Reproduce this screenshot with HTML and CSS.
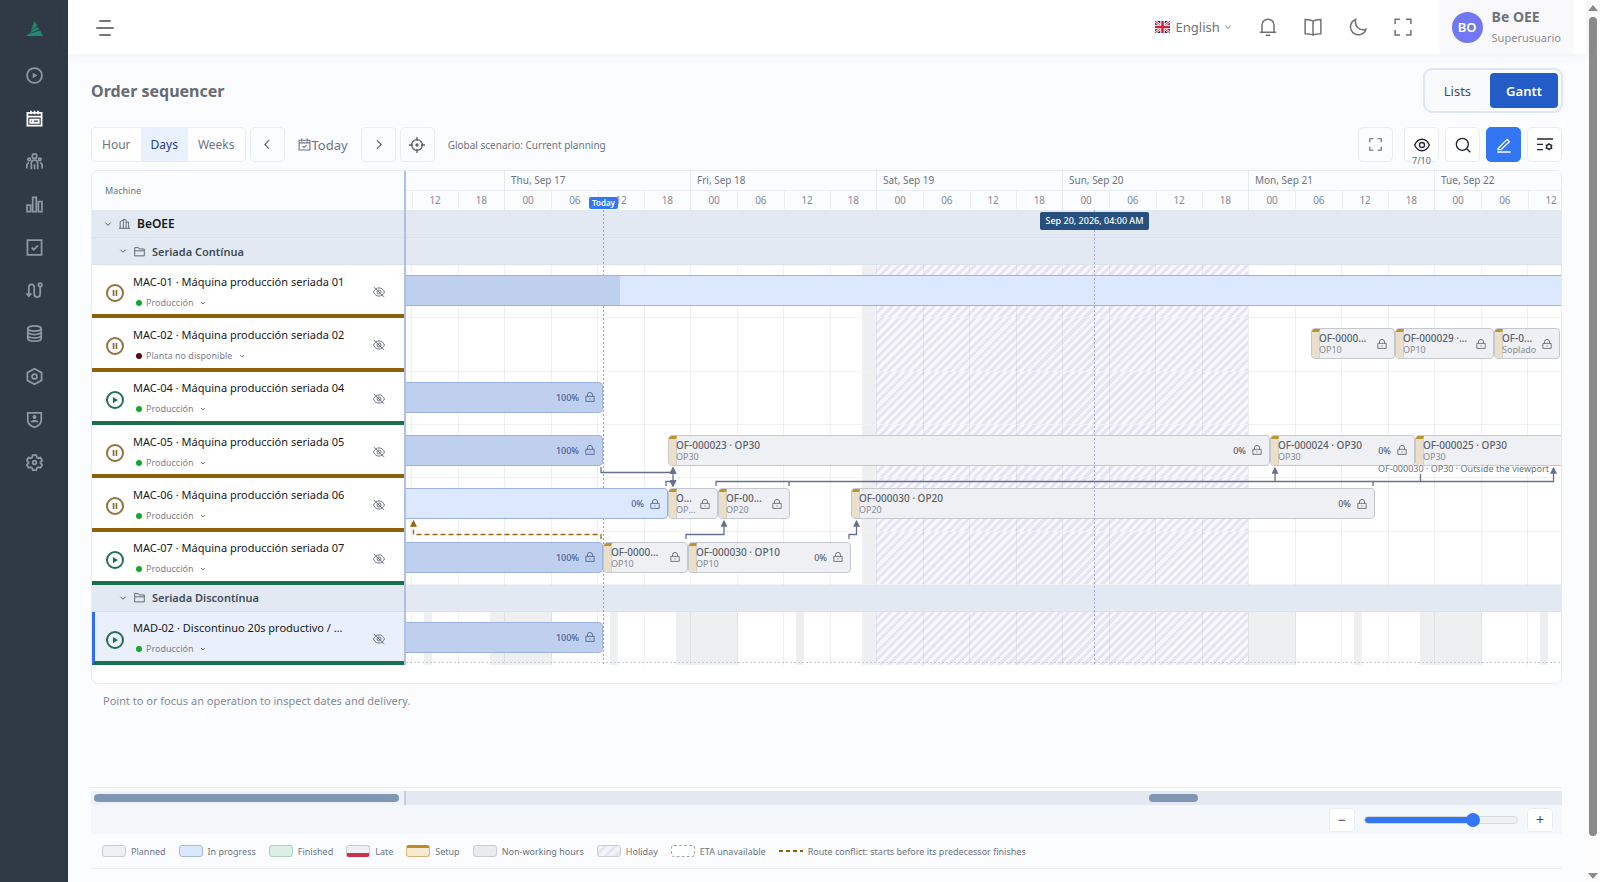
FILE: index.html
```html
<!DOCTYPE html>
<html lang="en">
<head>
    <meta charset="UTF-8">
    <meta name="viewport" content="width=device-width, initial-scale=1.0">
    <title>Order sequencer</title>
    <link rel="stylesheet" href="styles.css">
</head>
<body>
    <svg class="sprite" aria-hidden="true">
        <symbol id="i-play-circle" viewBox="0 0 24 24"><circle cx="12" cy="12" r="10.5"/><path d="M9.5 8v8l6.500-4z" fill="currentColor" stroke="none"/></symbol>
        <symbol id="i-planner" viewBox="0 0 24 24"><path d="M2 4h20v18H2zM2 9.500h20M7 1v5M12 1v5M17 1v5M6 13.500h12v4.500H6zM10 13.500v4.500"/></symbol>
        <symbol id="i-team" viewBox="0 0 24 24"><circle cx="12" cy="4.500" r="3.200"/><circle cx="4.500" cy="9" r="1.800"/><circle cx="19.500" cy="9" r="1.800"/><path d="M7.500 23v-8.500a4.500 4.500 0 0 1 9 0V23M12 16v7M1.200 22v-5a3.300 3.300 0 0 1 3-3M22.800 22v-5a3.300 3.300 0 0 0-3-3"/></symbol>
        <symbol id="i-chart" viewBox="0 0 24 24"><path d="M1.500 13h5v9h-5zM9.500 2h5v20h-5zM17.500 8h5v14h-5z"/></symbol>
        <symbol id="i-check-square" viewBox="0 0 24 24"><path d="M2 1.500h20v21H2zM8 12l3 3 6-6"/></symbol>
        <symbol id="i-route" viewBox="0 0 24 24"><path d="M4 20V7a3.800 3.800 0 0 1 7.600 0v10a4.200 4.200 0 0 0 8.400 0V7M.500 16l3.500 4 3.500-4"/><circle cx="20" cy="4" r="2.500"/></symbol>
        <symbol id="i-database" viewBox="0 0 24 24"><ellipse cx="12" cy="5" rx="9.500" ry="3.700"/><path d="M2.500 5v14c0 5 19 5 19 0V5M2.500 9.700c0 5 19 5 19 0M2.500 14.300c0 5 19 5 19 0"/></symbol>
        <symbol id="i-hex" viewBox="0 0 24 24"><path d="M12 1l10 5.500v11L12 23 2 17.500v-11z"/><circle cx="12" cy="12" r="3.500"/></symbol>
        <symbol id="i-shield" viewBox="0 0 24 24"><path d="M2.500 2.500h19V13c0 5-4 8-9.500 10.200C6.500 21 2.500 18 2.500 13z"/><circle cx="12" cy="8.500" r="2.800" fill="currentColor" stroke="none"/><path d="M6.500 16c0-5 11-5 11 0z" fill="currentColor" stroke="none"/></symbol>
        <symbol id="i-gear" viewBox="0 0 24 24"><path d="M9.500 1.500h5l.8 3.200 2 1.200 3.200-1 2.400 4.200-2.400 2.300v1.600l2.400 2.300-2.400 4.200-3.200-1-2 1.200-.8 3.200h-5l-.8-3.200-2-1.200-3.200 1-2.400-4.200L3.500 13v-1.600L1.100 9.100l2.400-4.200 3.200 1 2-1.200z"/><circle cx="12" cy="12" r="2.500"/></symbol>
        <symbol id="i-chevron-down" viewBox="0 0 24 24"><path d="M4 8l8 8 8-8"/></symbol>
        <symbol id="i-chevron-left" viewBox="0 0 24 24"><path d="M15 4l-8 8 8 8"/></symbol>
        <symbol id="i-chevron-right" viewBox="0 0 24 24"><path d="M9 4l8 8-8 8"/></symbol>
        <symbol id="i-bell" viewBox="0 0 24 24"><path d="M4 19V9.500a8 8 0 0 1 16 0V19M1 19h22M9 23h6"/></symbol>
        <symbol id="i-book" viewBox="0 0 24 24"><path d="M12 4.500C10.500 3 8.500 2 1.500 2v19c5.500 0 8.500.5 10.500 2 2-1.500 5-2 10.500-2V2C15.500 2 13.500 3 12 4.500zM12 4.500V23"/></symbol>
        <symbol id="i-moon" viewBox="0 0 24 24"><path d="M9 2a10.500 10.500 0 1 0 13.500 13C15 18 6.500 11 9 2z"/></symbol>
        <symbol id="i-expand" viewBox="0 0 24 24"><path d="M1.500 8V1.500H8M16 1.500h6.500V8M22.500 16v6.500H16M8 22.500H1.500V16"/></symbol>
        <symbol id="i-calendar-check" viewBox="0 0 24 24"><path d="M2 4h20v18H2zM2 9h20M7 1v6M17 1v6M8.500 15l2.500 2.500 5-4.500"/></symbol>
        <symbol id="i-target" viewBox="0 0 24 24"><circle cx="12" cy="12" r="8"/><circle cx="12" cy="12" r="1.500" fill="currentColor"/><path d="M12 0v6M12 18v6M0 12h6M18 12h6"/></symbol>
        <symbol id="i-eye" viewBox="0 0 24 24"><path d="M1 12c5-11.500 17-11.500 22 0-5 11.500-17 11.500-22 0z"/><circle cx="12" cy="12" r="3.800"/></symbol>
        <symbol id="i-eye-off" viewBox="0 0 24 24"><path d="M1 12c5-11 17-11 22 0-5 11-17 11-22 0zM1.500 2l21 20"/><circle cx="12" cy="12" r="4"/></symbol>
        <symbol id="i-search" viewBox="0 0 24 24"><circle cx="11" cy="11" r="9"/><path d="M17.500 17.500l5.500 5.500"/></symbol>
        <symbol id="i-pencil" viewBox="0 0 24 24"><path d="M3 17.500L16.500 3.500l3.500 3.500L7.500 19H3zM2 22.500h20"/></symbol>
        <symbol id="i-settings-list" viewBox="0 0 24 24"><path d="M0 3h24M0 11h9M0 19h9"/><circle cx="18" cy="14.500" r="3.500"/><path d="M18 9v2M18 18v2M13 12l2 1M21 16l2 1M13 17l2-1M21 13l2-1"/></symbol>
        <symbol id="i-building" viewBox="0 0 24 24"><path d="M0 22.500h24M2.500 22V8l7-3.500M9.500 22V2.500l6 2V22M15.500 9H21v13"/></symbol>
        <symbol id="i-folder" viewBox="0 0 24 24"><path d="M1.500 21.500v-18h8l2 3h11v15zM1.500 10.500h21"/></symbol>
        <symbol id="i-lock" viewBox="0 0 24 24"><path d="M2 10.500h20v12H2zM6 10.500V7a6 6 0 0 1 12 0v3.500M12 15v3"/></symbol>
        <symbol id="i-play" viewBox="0 0 24 24"><path d="M7 4.500v15l12-7.500z" fill="currentColor" stroke="none"/></symbol>
        <symbol id="i-pause" viewBox="0 0 24 24"><path d="M8.500 5v14M15.500 5v14" stroke-width="4"/></symbol>
    </svg>

    <nav class="sidebar" aria-label="Main">
        <a class="logo" href="#" aria-label="Be OEE">
            <svg class="logo-mark" viewBox="0 0 18 16"><path d="M9 0l3 5-7 5zM12.500 6l1.500 3-10 4 2-3zM15 10l3 6H0l2-2z" fill="#1f8a70"/></svg>
        </a>
        <a href="#" aria-label="Production"><svg class="icon"><use href="#i-play-circle"/></svg></a>
        <a href="#" class="active" aria-label="Planning"><svg class="icon"><use href="#i-planner"/></svg></a>
        <a href="#" aria-label="Teams"><svg class="icon"><use href="#i-team"/></svg></a>
        <a href="#" aria-label="Reports"><svg class="icon"><use href="#i-chart"/></svg></a>
        <a href="#" aria-label="Quality"><svg class="icon"><use href="#i-check-square"/></svg></a>
        <a href="#" aria-label="Routes"><svg class="icon"><use href="#i-route"/></svg></a>
        <a href="#" aria-label="Data"><svg class="icon"><use href="#i-database"/></svg></a>
        <a href="#" aria-label="Maintenance"><svg class="icon"><use href="#i-hex"/></svg></a>
        <a href="#" aria-label="Users"><svg class="icon"><use href="#i-shield"/></svg></a>
        <a href="#" aria-label="Settings"><svg class="icon"><use href="#i-gear"/></svg></a>
    </nav>

    <div class="page">
        <header class="topbar">
            <button class="menu-btn" aria-label="Toggle menu"><span></span><span></span><span></span></button>
            <div class="topbar-right">
                <label class="language">
                    <svg class="flag" viewBox="0 0 30 24"><path fill="#1d2f6f" d="M0 0h30v24H0z"/><path stroke="#fff" stroke-width="5" d="M0 0l30 24M30 0L0 24"/><path stroke="#d5203a" stroke-width="2" d="M0 0l30 24M30 0L0 24"/><path stroke="#fff" stroke-width="9" d="M15 0v24M0 12h30"/><path stroke="#d5203a" stroke-width="5" d="M15 0v24M0 12h30"/></svg>
                    <select aria-label="Language"><option>English</option></select>
                    <svg class="icon xs"><use href="#i-chevron-down"/></svg>
                </label>
                <button class="top-icon" aria-label="Notifications"><svg class="icon"><use href="#i-bell"/></svg></button>
                <button class="top-icon" aria-label="Manual"><svg class="icon"><use href="#i-book"/></svg></button>
                <button class="top-icon" aria-label="Dark mode"><svg class="icon"><use href="#i-moon"/></svg></button>
                <button class="top-icon" aria-label="Full screen"><svg class="icon"><use href="#i-expand"/></svg></button>
                <button class="user">
                    <span class="avatar">BO</span>
                    <span class="user-text"><strong>Be OEE</strong><small>Superusuario</small></span>
                </button>
            </div>
        </header>

        <main class="content">
            <div class="title-row">
                <h1>Order sequencer</h1>
                <div class="view-switch">
                    <button>Lists</button>
                    <button class="selected">Gantt</button>
                </div>
            </div>

            <div class="toolbar">
                <div class="segmented">
                    <button>Hour</button>
                    <button class="selected">Days</button>
                    <button>Weeks</button>
                </div>
                <button class="tool" aria-label="Previous"><svg class="icon"><use href="#i-chevron-left"/></svg></button>
                <button class="today"><svg class="icon"><use href="#i-calendar-check"/></svg>Today</button>
                <button class="tool" aria-label="Next"><svg class="icon"><use href="#i-chevron-right"/></svg></button>
                <button class="tool locate" aria-label="Center on now"><svg class="icon md"><use href="#i-target"/></svg></button>
                <span class="scenario">Global scenario: Current planning</span>
                <div class="tools">
                    <button class="tool fullscreen" aria-label="Full screen"><svg class="icon"><use href="#i-expand"/></svg></button>
                    <button class="tool solid" aria-label="Visible machines"><svg class="icon md"><use href="#i-eye"/></svg><span class="count">7/10</span></button>
                    <button class="tool solid" aria-label="Search"><svg class="icon md"><use href="#i-search"/></svg></button>
                    <button class="tool primary" aria-label="Edit"><svg class="icon md"><use href="#i-pencil"/></svg></button>
                    <button class="tool solid" aria-label="Options"><svg class="icon md"><use href="#i-settings-list"/></svg></button>
                </div>
            </div>

            <section class="planner">
                <div class="gantt">
                    <div class="resources">
                        <div class="resources-head">Machine</div>
                        <div class="rows" id="resources"></div>
                    </div>
                    <div class="timeline">
                        <div class="scale" id="scale"></div>
                        <div class="rows" id="tracks"></div>
                        <div class="gridlines" id="gridlines"></div>
                        <div class="now-line" id="now-line"><span>Today</span></div>
                        <svg class="links">
                            <defs>
                                <marker id="arrow" viewBox="0 0 6 6" refX="5" refY="3" markerWidth="7" markerHeight="7" markerUnits="userSpaceOnUse" orient="auto"><path d="M0 0l6 3-6 3z" fill="#66718d"/></marker>
                                <marker id="arrow-conflict" viewBox="0 0 6 6" refX="5" refY="3" markerWidth="7" markerHeight="7" markerUnits="userSpaceOnUse" orient="auto"><path d="M0 0l6 3-6 3z" fill="#94690f"/></marker>
                            </defs>
                            <path class="link" d="M195 257V262.500H267V258"/>
                            <path class="link" d="M260 276V271.500H267V276"/>
                            <path class="link" d="M267 266V258"/>
                            <path class="link" d="M267 266V276"/>
                            <path class="link" d="M310 276V271.500H1147.500V258"/>
                            <path class="link" d="M869 271.500V258"/>
                            <path class="link plain" d="M383 276V271.500M967 276V271.500M1014.500 271.500V264"/>
                            <path class="link" d="M280 329V324.500H318V311"/>
                            <path class="link" d="M443 329V324.500H450.500V311"/>
                            <path class="link conflict" d="M195 329V324.500H7.500V311"/>
                        </svg>
                        <span class="link-label">OF-000030 · OP30 · Outside the viewport</span>
                        <div class="cursor-line" id="cursor-line"><span>Sep 20, 2026, 04:00 AM</span></div>
                    </div>
                </div>
                <p class="hint">Point to or focus an operation to inspect dates and delivery.</p>

                <div class="scrollers">
                    <div class="scroller left"><span></span></div>
                    <div class="scroller right"><span></span></div>
                </div>
                <div class="zoom-row">
                    <button aria-label="Zoom out">−</button>
                    <input type="range" min="0" max="100" value="73" aria-label="Zoom">
                    <button aria-label="Zoom in">+</button>
                </div>
                <ul class="legend">
                    <li><i class="swatch"></i>Planned</li>
                    <li><i class="swatch progress"></i>In progress</li>
                    <li><i class="swatch finished"></i>Finished</li>
                    <li><i class="swatch late"></i>Late</li>
                    <li><i class="swatch setup"></i>Setup</li>
                    <li><i class="swatch closed"></i>Non-working hours</li>
                    <li><i class="swatch holiday"></i>Holiday</li>
                    <li><i class="swatch eta"></i>ETA unavailable</li>
                    <li><i class="dash"></i>Route conflict: starts before its predecessor finishes</li>
                </ul>
            </section>
        </main>
    </div>

    <div class="page-scroll" aria-hidden="true"><i class="up"></i><span></span><i class="down"></i></div>

    <script src="script.js"></script>
</body>
</html>
```

FILE: styles.css
```css
* {
    box-sizing: border-box;
}

body {
    margin: 0;
    min-height: 100vh;
    display: flex;
    font-family: "Segoe UI", "Noto Sans", sans-serif;
    font-size: 12px;
    color: #6c7482;
    background: #fbfcfe;
}

button,
select,
input {
    font: inherit;
    color: inherit;
}

button {
    padding: 0;
    border: none;
    background: none;
    cursor: pointer;
}

select {
    appearance: none;
    padding: 0;
    border: none;
    background: none;
}

.sprite {
    position: absolute;
    width: 0;
    height: 0;
}

.icon {
    width: 13px;
    height: 13px;
    flex: none;
    fill: none;
    stroke: currentColor;
    stroke-width: 2;
    overflow: visible;
}

.icon.md {
    width: 16px;
    height: 16px;
}

.icon.xs {
    width: 8px;
    height: 8px;
    stroke-width: 3;
}

/* sidebar */
.sidebar {
    width: 68px;
    flex: none;
    display: flex;
    flex-direction: column;
    align-items: center;
    gap: 26px;
    padding-top: 21px;
    background: #303a46;
    color: #8c97a5;
}

.sidebar a {
    display: flex;
    height: 17px;
    color: inherit;
}

.sidebar .logo {
    height: 20px;
}

.sidebar .active {
    color: #fff;
}

.sidebar .icon {
    width: 17px;
    height: 17px;
    stroke-width: 2.5;
}

.logo-mark {
    width: 17px;
    height: 15px;
}

/* top bar */
.page {
    flex: 1;
    min-width: 0;
    display: flex;
    flex-direction: column;
}

.topbar {
    position: relative;
    height: 54px;
    display: flex;
    justify-content: space-between;
    padding: 0 12px 0 28px;
    background: #fff;
    box-shadow: 0 0 12px rgba(40, 60, 90, 0.08);
}

.menu-btn {
    width: 18px;
    display: flex;
    flex-direction: column;
    align-items: center;
    justify-content: center;
    gap: 5px;
    padding-top: 2px;
}

.menu-btn span {
    width: 12px;
    height: 2px;
    border-radius: 1px;
    background: #74777c;
}

.menu-btn span:nth-child(2) {
    width: 18px;
}

.topbar-right {
    display: flex;
    align-items: center;
    color: #707277;
}

.language {
    display: flex;
    align-items: center;
    margin-right: 27px;
    font-size: 13px;
}

.language select {
    margin: 0 3px 0 6px;
}

.flag {
    width: 15px;
    height: 12px;
}

.top-icon {
    display: flex;
    margin-right: 27px;
}

.top-icon .icon {
    width: 18px;
    height: 18px;
    stroke-width: 2;
}

.user {
    align-self: stretch;
    display: flex;
    align-items: center;
    gap: 9px;
    padding: 0 13px;
    background: #f9f9fc;
    text-align: left;
}

.avatar {
    width: 31px;
    height: 31px;
    border-radius: 50%;
    background: #7178f2;
    color: #fff;
    font-weight: 600;
    font-size: 13px;
    line-height: 31px;
    text-align: center;
}

.user-text {
    display: flex;
    flex-direction: column;
    gap: 3px;
}

.user-text strong {
    font-size: 14px;
    line-height: 18px;
}

.user-text small {
    font-size: 11px;
    line-height: 18px;
    color: #8b8e95;
}

/* title and toolbar */
.content {
    flex: 1;
    display: flex;
    flex-direction: column;
    padding: 14px 24px 0 23px;
}

.title-row {
    display: flex;
    justify-content: space-between;
    align-items: center;
}

h1 {
    margin: 0;
    font-size: 16px;
    font-weight: 700;
    color: #666b73;
}

.view-switch {
    display: flex;
    gap: 3px;
    height: 45px;
    padding: 3px;
    margin-right: -1px;
    border: 2px solid #dfe6fa;
    border-radius: 9px;
    font-size: 13px;
    background: #f8fafc;
}

.view-switch button {
    padding: 0 16px;
    border-radius: 4px;
    color: #46505e;
}

.view-switch .selected {
    background: #235cc6;
    color: #fff;
    font-weight: 600;
}

.toolbar {
    display: flex;
    align-items: center;
    height: 35px;
    margin: 14px 0 8px;
}

.segmented {
    display: flex;
    align-self: stretch;
    margin-right: 4px;
    border: 1px solid #e9edf3;
    border-radius: 5px;
    overflow: hidden;
    font-size: 12px;
    background: #fff;
}

.segmented button {
    padding: 0 10px;
}

.segmented .selected {
    background: #e9f0fe;
    color: #263c87;
}

.tool {
    width: 35px;
    height: 35px;
    display: flex;
    align-items: center;
    justify-content: center;
    border: 1px solid #e9edf3;
    border-radius: 5px;
    color: #59616d;
}

.today {
    display: flex;
    align-items: center;
    gap: 1px;
    padding: 0 13px;
    font-size: 13px;
}

.locate {
    margin-left: 4px;
}

.scenario {
    margin-left: 13px;
    font-size: 10px;
}

.tools {
    display: flex;
    gap: 6px;
    margin-left: auto;
}

.tool.fullscreen {
    margin-right: 5px;
}

.tool.solid {
    position: relative;
    background: #fff;
    color: #22272f;
}

.tool.primary {
    border-color: #3276f3;
    background: #3276f3;
    color: #fff;
}

.count {
    position: absolute;
    bottom: -6px;
    font-size: 9px;
    line-height: 12px;
    background: #fff;
    color: #59616d;
}

/* gantt */
.planner {
    flex: 1;
    display: flex;
    flex-direction: column;
    margin-bottom: 13px;
}

.gantt {
    display: flex;
    padding-bottom: 18px;
    border: 1px solid #e8ecf2;
    border-radius: 7px;
    overflow: hidden;
    background: #fff;
}

.resources {
    width: 314px;
    flex: none;
    border-right: 2px solid #afc1e2;
}

.resources-head {
    height: 39px;
    padding: 0 13px;
    font-size: 9px;
    line-height: 40px;
    background: #fafcfe;
}

.rows {
    display: grid;
    grid-template-rows: 28px 27px repeat(6, 1fr) 27px 53px;
    height: 455px;
}

.group {
    display: flex;
    align-items: center;
    gap: 7px;
    padding-left: 27px;
    border-bottom: 1px solid #d9e2ec;
    background: #e2e9f2;
    color: #434c59;
    font-size: 11px;
    font-weight: 600;
}

.group.plant {
    padding-left: 12px;
    color: #15191f;
    font-size: 12px;
}

.group .icon {
    width: 11px;
    height: 11px;
    color: #59616d;
}

.group .icon.xs {
    width: 8px;
    height: 8px;
}

.machine {
    display: flex;
    align-items: center;
    gap: 9px;
    padding: 0 19px 0 14px;
    border-bottom: 4px solid #8e6108;
}

.machine.running {
    border-bottom-color: #1a704e;
}

.machine.selected {
    padding-left: 11px;
    border-left: 3px solid #2f6df2;
    background: #e9f0fc;
}

.state {
    width: 18px;
    height: 18px;
    flex: none;
    margin-top: 7px;
    display: flex;
    align-items: center;
    justify-content: center;
    border: 2px solid #94713f;
    border-radius: 50%;
    color: #8b6a3c;
}

.state .icon {
    width: 10px;
    height: 10px;
}

.running .state {
    border-color: #256e54;
    color: #1a704e;
}

.machine-text {
    flex: 1;
    min-width: 0;
    padding-top: 4px;
}

.machine-name {
    width: 214px;
    overflow: hidden;
    white-space: nowrap;
    text-overflow: ellipsis;
    font-size: 11px;
    line-height: 18px;
    color: #15191f;
}

.status {
    display: flex;
    align-items: center;
    gap: 4px;
    padding: 4px 0 0 3px;
    font-size: 9px;
    line-height: 16px;
    color: #7b828d;
}

.status select {
    height: 16px;
}

.status i {
    width: 6px;
    height: 6px;
    border-radius: 50%;
    background: #12a82e;
}

.status i.down {
    background: #5f0a10;
}

.status .icon {
    width: 6px;
    height: 6px;
    margin-left: 2px;
    stroke-width: 4;
}

.hide-btn {
    display: flex;
    margin-top: 5px;
}

.hide-btn .icon {
    width: 12px;
    height: 12px;
}

/* timeline */
.timeline {
    flex: 1;
    min-width: 0;
    position: relative;
    overflow: hidden;
}

.scale {
    display: flex;
    height: 39px;
    background: #fafcfe;
}

.day {
    width: 186px;
    flex: none;
    border-left: 1px solid #e6ebf1;
}

.day:first-child {
    margin-left: -88px;
}

.day-name {
    height: 20px;
    padding-left: 6px;
    border-bottom: 1px solid #e9edf3;
    font-size: 10px;
    line-height: 18px;
}

.hours {
    display: grid;
    grid-template-columns: repeat(4, 1fr);
    text-align: center;
    font-size: 10px;
    line-height: 18px;
    color: #858b95;
}

.hours span + span {
    border-left: 1px solid #e9edf3;
}

.gridlines {
    position: absolute;
    z-index: 1;
    inset: 39px 0 0;
    height: 455px;
    display: flex;
    pointer-events: none;
}

.gridlines .day {
    display: grid;
    grid-template-columns: repeat(4, 1fr);
    border-left: none;
}

.gridlines span {
    border-left: 1px solid rgba(150, 165, 195, 0.18);
}

.timeline .group {
    position: relative;
    z-index: 2;
}

.track {
    position: relative;
    border-bottom: 1px solid #f0f2f6;
}

.track.last {
    border-bottom: none;
}

.track.last::after {
    content: "";
    position: absolute;
    inset: auto 0 2px;
    height: 1px;
    background: repeating-linear-gradient(90deg, #c9ced8 0 2px, transparent 2px 4px);
}

.closed-hours,
.holiday-hours {
    position: absolute;
    top: 0;
    bottom: 0;
    background: #edeff0;
}

.holiday-hours {
    background: repeating-linear-gradient(135deg, #f8f7fd 0 3px, #e6e3f2 3px 6px);
}

.bar {
    position: absolute;
    z-index: 4;
    top: 10px;
    height: 31px;
    display: flex;
    align-items: center;
    justify-content: flex-end;
    gap: 3px;
    padding-right: 7px;
    border: 1px solid #c3c8d0;
    border-radius: 4px;
    overflow: hidden;
    background: #eff0f3;
    color: #5b616b;
    font-size: 9px;
    font-weight: 500;
    text-align: left;
}

.bar.started {
    border-color: #9db2e0;
    background: #dce8fe;
    color: #4a5c93;
}

.bar.done {
    background: #bfd0ee;
}

.bar .fill {
    position: absolute;
    inset: 0 auto 0 0;
    background: #bfd0ee;
}

.bar .setup-strip {
    align-self: stretch;
    width: 8px;
    flex: none;
    margin-right: -4px;
    border-top: 3px solid #c0922a;
    border-right: 1px solid #dcd2bb;
    background: #e9dfcb;
}

.bar-text {
    flex: 1;
    min-width: 0;
    line-height: 12px;
}

.bar-text b,
.bar-text small {
    display: block;
    overflow: hidden;
    white-space: nowrap;
    text-overflow: ellipsis;
}

.bar-text b {
    margin-right: 4px;
    font-size: 10px;
    font-weight: 500;
}

.bar-text small {
    font-size: 9px;
    font-weight: 400;
    line-height: 11px;
    color: #858b95;
}

.bar .icon {
    width: 10px;
    height: 10px;
}

.bar .percent {
    margin-right: 3px;
}

/* vertical markers */
.now-line,
.cursor-line {
    position: absolute;
    z-index: 3;
    top: 39px;
    width: 1px;
    height: 455px;
    display: flex;
    justify-content: center;
    background: repeating-linear-gradient(#86a4f2 0 2px, transparent 2px 4px);
}

.now-line span {
    position: absolute;
    top: -13px;
    padding: 0 3px;
    border-radius: 2px;
    background: #3276f3;
    color: #fff;
    font-size: 8px;
    font-weight: 600;
    line-height: 12px;
}

.cursor-line {
    z-index: 6;
    background: repeating-linear-gradient(#a5aec8 0 2px, transparent 2px 4px);
}

.cursor-line span {
    position: absolute;
    top: 2px;
    padding: 0 5px;
    border-radius: 2px;
    background: #28507f;
    color: #fff;
    font-size: 9px;
    font-weight: 500;
    line-height: 18px;
    white-space: nowrap;
}

.links {
    position: absolute;
    z-index: 5;
    top: 39px;
    left: 0;
    width: 100%;
    height: 455px;
    pointer-events: none;
}

.link {
    fill: none;
    stroke: #66718d;
    stroke-width: 1.3;
    marker-end: url(#arrow);
}

.link.plain {
    marker-end: none;
}

.link.conflict {
    stroke: #94690f;
    stroke-dasharray: 5 3;
    marker-end: url(#arrow-conflict);
}

.link-label {
    position: absolute;
    z-index: 5;
    top: 291px;
    right: 12px;
    font-size: 9px;
    line-height: 14px;
    text-shadow: 0 0 2px #fff, 0 0 2px #fff;
}

.hint {
    margin: 8px 12px;
    font-size: 11px;
    line-height: 18px;
    color: #858b95;
}

/* bottom scrollbars, zoom and legend */
.scrollers {
    display: flex;
    height: 18px;
    margin-top: auto;
    border-top: 1px solid #e9edf3;
}

.scroller {
    margin-top: 3px;
    padding: 3px;
    background: #e4e9f1;
}

.scroller.left {
    width: 315px;
    border-right: 2px solid #c3cfe5;
    background: #eef2f7;
}

.scroller.right {
    flex: 1;
    display: flex;
    padding-left: 743px;
}

.scroller span {
    display: block;
    width: 49px;
    height: 8px;
    border-radius: 4px;
    background: #8096b5;
}

.scroller.left span {
    width: 305px;
}

.zoom-row {
    display: flex;
    justify-content: flex-end;
    align-items: center;
    gap: 9px;
    height: 29px;
    padding-right: 9px;
    background: #f5f8fb;
}

.zoom-row button {
    width: 26px;
    height: 24px;
    border: 1px solid #e9edf3;
    border-radius: 4px;
    background: #fff;
    color: #434c59;
    font-size: 14px;
    line-height: 20px;
}

.zoom-row input {
    appearance: none;
    width: 154px;
    height: 14px;
    margin: 0;
    background: none;
}

.zoom-row input::-webkit-slider-runnable-track {
    height: 8px;
    border: 1px solid #d5d8dc;
    border-radius: 4px;
    background: linear-gradient(90deg, #3276f3 72%, #eff0f0 72%);
}

.zoom-row input::-webkit-slider-thumb {
    appearance: none;
    width: 14px;
    height: 14px;
    margin-top: -4px;
    border-radius: 50%;
    background: #3276f3;
}

.legend {
    display: flex;
    gap: 13px;
    margin: 0;
    padding: 0 11px;
    border-bottom: 1px solid #edf0f5;
    height: 35px;
    list-style: none;
    font-size: 9px;
}

.legend li {
    display: flex;
    align-items: center;
    gap: 5px;
    white-space: nowrap;
}

.swatch {
    width: 24px;
    height: 12px;
    border: 1px solid #c8ccd3;
    border-radius: 3px;
    background: #eff0f3;
}

.swatch.progress {
    border-color: #a7b9e8;
    background: #dce8fe;
}

.swatch.finished {
    border-color: #a9d3bc;
    background: #dbefe4;
}

.swatch.late {
    border-bottom: 4px solid #c9344b;
}

.swatch.setup {
    border-color: #d8b672;
    border-top: 3px solid #b98e1f;
    background: #f6ead3;
}

.swatch.closed {
    background: #e9ebee;
}

.swatch.holiday {
    background: repeating-linear-gradient(135deg, #f4f3fb 0 4px, #e5e4f0 4px 7px);
}

.swatch.eta {
    border: 1px dashed #a5a9b0;
    background: #fff;
}

.dash {
    width: 24px;
    height: 2px;
    background: repeating-linear-gradient(90deg, #8e6108 0 4px, transparent 4px 7px);
}

/* page scrollbar */
.page-scroll {
    width: 14px;
    flex: none;
    display: flex;
    flex-direction: column;
    align-items: center;
    gap: 6px;
    padding: 5px 0 3px;
    background: #fcfcfd;
}

.page-scroll span {
    width: 8px;
    flex: 1;
    margin-bottom: 31px;
    border-radius: 4px;
    background: #8b8b8b;
}

.page-scroll i {
    border: 5px solid transparent;
    border-top-width: 0;
    border-bottom: 6px solid #8b8b8b;
}

.page-scroll .down {
    border-top: 6px solid #8b8b8b;
    border-bottom-width: 0;
}
```

FILE: script.js
```js
// hours are counted from Thu, Sep 17 00:00
const DAY_WIDTH = 186;
const ORIGIN = 98;
const toX = hour => Math.round(ORIGIN + hour * DAY_WIDTH / 24);

const days = ['', 'Thu, Sep 17', 'Fri, Sep 18', 'Sat, Sep 19', 'Sun, Sep 20', 'Mon, Sep 21', 'Tue, Sep 22'];
const weekend = [{ from: 46.2, to: 48 }, { from: 48, to: 96, holiday: true }];
const shifts = [
    [-10.3, -9.3], [-1.8, 6.2], [13.7, 14.7], [22.2, 30.2], [37.7, 38.7],
    [96, 102.2], [109.7, 110.7], [118.2, 126.2], [133.7, 134.7]
].map(([from, to]) => ({ from, to }));

const rows = [
    { group: 'BeOEE', plant: true },
    { group: 'Seriada Contínua' },
    { name: 'MAC-01 · Máquina producción seriada 01', bars: [{ from: -20, to: 145, started: true, fillTo: 14.8 }] },
    { name: 'MAC-02 · Máquina producción seriada 02', status: 'Planta no disponible', down: true, bars: [
        { from: 104.1, to: 115, order: 'OF-000028 · OP10', op: 'OP10' },
        { from: 115, to: 127.7, order: 'OF-000029 · OP10', op: 'OP10' },
        { from: 127.7, to: 136.3, order: 'OF-000031 · OP10', op: 'Soplado' }
    ] },
    { name: 'MAC-04 · Máquina producción seriada 04', running: true, bars: [{ from: -20, to: 12.8, started: true, done: '100%' }] },
    { name: 'MAC-05 · Máquina producción seriada 05', bars: [
        { from: -20, to: 12.8, started: true, done: '100%' },
        { from: 21.2, to: 98.8, order: 'OF-000023 · OP30', op: 'OP30', done: '0%' },
        { from: 98.8, to: 117.5, order: 'OF-000024 · OP30', op: 'OP30', done: '0%' },
        { from: 117.5, to: 145, order: 'OF-000025 · OP30', op: 'OP30' }
    ] },
    { name: 'MAC-06 · Máquina producción seriada 06', bars: [
        { from: -20, to: 21.1, started: true, done: '0%' },
        { from: 21.2, to: 27.6, order: 'OF-000024 · OP20', op: 'OP20' },
        { from: 27.6, to: 36.9, order: 'OF-000025 · OP20', op: 'OP20' },
        { from: 44.8, to: 112.4, order: 'OF-000030 · OP20', op: 'OP20', done: '0%' }
    ] },
    { name: 'MAC-07 · Máquina producción seriada 07', running: true, bars: [
        { from: -20, to: 12.8, started: true, done: '100%' },
        { from: 12.8, to: 23.7, order: 'OF-000026 · OP10', op: 'OP10' },
        { from: 23.7, to: 44.8, order: 'OF-000030 · OP10', op: 'OP10', done: '0%' }
    ] },
    { group: 'Seriada Discontínua' },
    { name: 'MAD-02 · Discontinuo 20s productivo / …', running: true, selected: true, closed: shifts,
        bars: [{ from: -20, to: 12.8, started: true, done: '100%' }] }
];

const icon = (name, size = '') => `<svg class="icon ${size}"><use href="#i-${name}"/></svg>`;
const span = (from, to) => `left:${toX(from)}px;width:${toX(to) - toX(from)}px`;

function resourceRow(row) {
    if (row.group) {
        return `<div class="group ${row.plant ? 'plant' : ''}">${icon('chevron-down', 'xs')}${icon(row.plant ? 'building' : 'folder')}${row.group}</div>`;
    }
    return `<div class="machine ${row.running ? 'running' : ''} ${row.selected ? 'selected' : ''}">
        <span class="state">${icon(row.running ? 'play' : 'pause')}</span>
        <div class="machine-text">
            <div class="machine-name">${row.name}</div>
            <label class="status"><i class="${row.down ? 'down' : ''}"></i>
                <select aria-label="Status"><option>${row.status || 'Producción'}</option></select>${icon('chevron-down')}</label>
        </div>
        <button class="hide-btn" aria-label="Hide machine">${icon('eye-off')}</button>
    </div>`;
}

function bar(b) {
    const done = b.done === '100%' ? 'done' : '';
    const fill = b.fillTo ? `<span class="fill" style="width:${toX(b.fillTo) - toX(b.from)}px"></span>` : '';
    const text = b.order ? `<span class="setup-strip"></span><span class="bar-text"><b>${b.order}</b><small>${b.op}</small></span>` : '';
    return `<button class="bar ${b.started ? 'started' : ''} ${done}" style="${span(b.from, b.to)}">${fill}${text}
        ${b.done ? `<span class="percent">${b.done}</span>` : ''}${icon('lock')}</button>`;
}

function trackRow(row) {
    if (row.group) return '<div class="group"></div>';
    const hours = weekend.concat(row.closed || [])
        .map(h => `<div class="${h.holiday ? 'holiday' : 'closed'}-hours" style="${span(h.from, h.to)}"></div>`).join('');
    return `<div class="track ${row.selected ? 'last' : ''}">${hours}${row.bars.map(bar).join('')}</div>`;
}

document.getElementById('resources').innerHTML = rows.map(resourceRow).join('');
document.getElementById('tracks').innerHTML = rows.map(trackRow).join('');
document.getElementById('scale').innerHTML = days.map(day => `<div class="day">
    <div class="day-name">${day}</div>
    <div class="hours"><span>00</span><span>06</span><span>12</span><span>18</span></div></div>`).join('');
document.getElementById('gridlines').innerHTML = days.map(() =>
    '<div class="day"><span></span><span></span><span></span><span></span></div>').join('');
document.getElementById('now-line').style.left = toX(12.8) + 'px';
document.getElementById('cursor-line').style.left = toX(76.1) + 'px';
```
